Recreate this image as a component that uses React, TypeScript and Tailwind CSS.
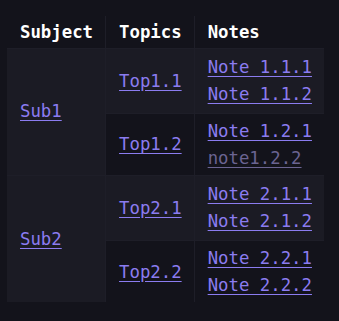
import React from "react";

type Note = { label: string; muted?: boolean };
type Topic = { name: string; notes: Note[] };
type Subject = { name: string; topics: Topic[] };

const subjects: Subject[] = [
  {
    name: "Sub1",
    topics: [
      { name: "Top1.1", notes: [{ label: "Note 1.1.1" }, { label: "Note 1.1.2" }] },
      { name: "Top1.2", notes: [{ label: "Note 1.2.1" }, { label: "note1.2.2", muted: true }] },
    ],
  },
  {
    name: "Sub2",
    topics: [
      { name: "Top2.1", notes: [{ label: "Note 2.1.1" }, { label: "Note 2.1.2" }] },
      { name: "Top2.2", notes: [{ label: "Note 2.2.1" }, { label: "Note 2.2.2" }] },
    ],
  },
];

const link = "text-[#8b7cf0] underline underline-offset-[3px]";

export default function App() {
  return (
    <div
      className="w-[339px] h-[321px] bg-[#13131b] pt-[16px] pl-[7px] text-[17.33px] leading-[26.67px]"
      style={{ fontFamily: '"DejaVu Sans Mono", monospace' }}
    >
      <table className="border-collapse">
        <thead>
          <tr>
            <th className="pl-[13px] pr-[12px] pt-[2.5px] pb-[2.5px] text-left font-bold text-white">Subject</th>
            <th className="pl-[13px] pr-[12px] pt-[2.5px] pb-[2.5px] text-left font-bold text-white border-l border-[#1e1e28]">Topics</th>
            <th className="pl-[13px] pr-[12px] pt-[2.5px] pb-[2.5px] text-left font-bold text-white border-l border-[#1e1e28]">Notes</th>
          </tr>
        </thead>
        <tbody>
          {subjects.map((s) =>
            s.topics.map((t, i) => {
              const striped = i === 0;
              const pad = striped ? "pt-[5.5px] pb-[5.5px]" : "pt-[4px] pb-[3.5px]";
              return (
                <tr key={t.name} className={striped ? "bg-[#1b1b24] border-t border-[#1e1e28]" : "bg-[#13131b] border-t border-[#1e1e28]"}>
                  {i === 0 && (
                    <td rowSpan={s.topics.length} className="pl-[13px] pr-[12px] bg-[#1b1b24] align-middle">
                      <a href="#" className={link}>{s.name}</a>
                    </td>
                  )}
                  <td className={"pl-[13px] pr-[12px] align-middle border-l border-[#1e1e28] " + pad}>
                    <a href="#" className={link}>{t.name}</a>
                  </td>
                  <td className={"pl-[13px] pr-[12px] align-middle border-l border-[#1e1e28] " + pad}>
                    {t.notes.map((n) => (
                      <div key={n.label}>
                        <a href="#" className={n.muted ? "text-[#6b6492] underline underline-offset-[3px]" : link}>
                          {n.label}
                        </a>
                      </div>
                    ))}
                  </td>
                </tr>
              );
            })
          )}
        </tbody>
      </table>
    </div>
  );
}
